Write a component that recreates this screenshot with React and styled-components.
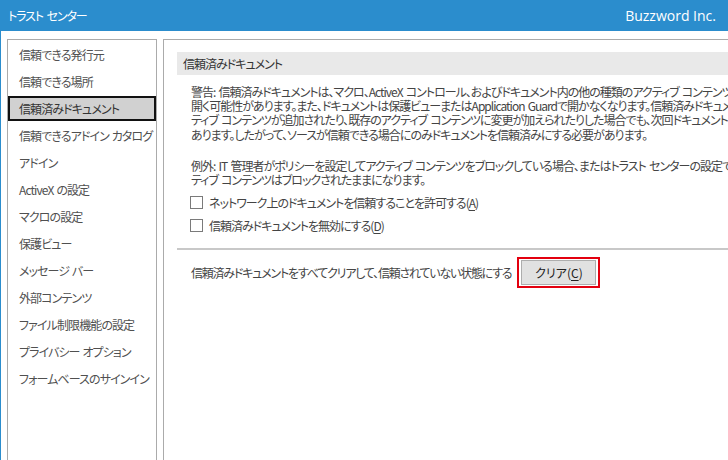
import React from 'react';
import styled, { createGlobalStyle } from 'styled-components';

const GlobalStyle = createGlobalStyle`
  html, body {
    margin: 0;
    padding: 0;
    height: 100%;
    overflow: hidden;
    background: #fff;
  }
  #root {
    height: 100%;
  }
`;

const BLUE = '#2b8dcd';
const JP = `"Noto Sans CJK JP", "Noto Sans", sans-serif`;

const navItems = [
  '信頼できる発行元',
  '信頼できる場所',
  '信頼済みドキュメント',
  '信頼できるアドイン カタログ',
  'アドイン',
  'ActiveX の設定',
  'マクロの設定',
  '保護ビュー',
  'メッセージ バー',
  '外部コンテンツ',
  'ファイル制限機能の設定',
  'プライバシー オプション',
  'フォームベースのサインイン',
];

const warning = [
  '警告: 信頼済みドキュメントは、マクロ、ActiveX コントロール、およびドキュメント内の他の種類のアクティブ コンテンツを',
  '開く可能性があります。また、ドキュメントは保護ビューまたはApplication Guardで開かなくなります。信頼済みドキュメントに新しいアク',
  'ティブ コンテンツが追加されたり、既存のアクティブ コンテンツに変更が加えられたりした場合でも、次回ドキュメントを開くときに確認されないことが',
  'あります。したがって、ソースが信頼できる場合にのみドキュメントを信頼済みにする必要があります。',
];

const exception = [
  '例外: IT 管理者がポリシーを設定してアクティブ コンテンツをブロックしている場合、またはトラスト センターの設定でアク',
  'ティブ コンテンツはブロックされたままになります。',
];

const App = () => (
  <>
    <GlobalStyle />
    <Window>
      <TitleBar>
        <TitleText>トラスト センター</TitleText>
        <Company>Buzzword Inc.</Company>
      </TitleBar>
      <Body>
        <Sidebar>
          {navItems.map(item => (
            <NavItem key={item} active={item === '信頼済みドキュメント'}>
              {item}
            </NavItem>
          ))}
        </Sidebar>
        <Panel>
          <SectionHeader>信頼済みドキュメント</SectionHeader>
          <Content>
            <Paragraph>
              {warning.map(line => (
                <Line key={line}>{line}</Line>
              ))}
            </Paragraph>
            <Paragraph gap>
              {exception.map(line => (
                <Line key={line}>{line}</Line>
              ))}
            </Paragraph>
            <CheckList>
              <CheckRow>
                <CheckBox />
                <span>
                  ネットワーク上のドキュメントを信頼することを許可する(<Key>A</Key>)
                </span>
              </CheckRow>
              <CheckRow>
                <CheckBox />
                <span>
                  信頼済みドキュメントを無効にする(<Key>D</Key>)
                </span>
              </CheckRow>
            </CheckList>
          </Content>
          <Divider />
          <ClearRow>
            <ClearText>信頼済みドキュメントをすべてクリアして、信頼されていない状態にする</ClearText>
            <Highlight>
              <Button>
                クリア(<Key>C</Key>)
              </Button>
            </Highlight>
          </ClearRow>
        </Panel>
      </Body>
    </Window>
  </>
);

export default App;

const Window = styled.div`
  display: flex;
  flex-direction: column;
  height: 100%;
  font-family: ${JP};
  font-feature-settings: 'palt';
  color: #444;
  font-size: 12px;
`;

const TitleBar = styled.div`
  display: flex;
  align-items: center;
  justify-content: space-between;
  height: 31px;
  padding: 0 12px 0 8px;
  background: ${BLUE};
  color: #fff;
  flex: none;
`;

const TitleText = styled.div`
  font-size: 12px;
  letter-spacing: -1.1px;
  word-spacing: 2px;
`;

const Company = styled.div`
  font-family: "Open Sans", "Noto Sans", sans-serif;
  font-size: 14px;
`;

const Body = styled.div`
  flex: 1;
  min-height: 0;
  display: flex;
  gap: 6px;
  padding: 8px 0 0 6px;
  border-left: 1px solid ${BLUE};
`;

const Sidebar = styled.div`
  flex: 0 0 150px;
  width: 150px;
  min-width: 0;
  overflow: hidden;
  box-sizing: border-box;
  border: 1px solid #ababab;
  border-bottom: none;
  padding-top: 1px;
`;

const NavItem = styled.div`
  height: 25px;
  box-sizing: border-box;
  margin: 1px 0 2px;
  padding-left: 9px;
  display: flex;
  align-items: center;
  white-space: nowrap;
  letter-spacing: -0.9px;
  word-spacing: 1px;
  border: 2px solid ${props => (props.active ? '#111' : 'transparent')};
  background: ${props => (props.active ? '#d1d1d1' : 'transparent')};
  color: ${props => (props.active ? '#333' : '#505050')};
`;

const Panel = styled.div`
  flex: 0 0 900px;
  box-sizing: border-box;
  border: 1px solid #ababab;
  border-bottom: none;
  padding: 12px 0 0 13px;
  letter-spacing: -1px;
  word-spacing: 1.5px;
`;

const SectionHeader = styled.div`
  height: 23px;
  display: flex;
  align-items: center;
  padding-left: 6px;
  background: #e9e9e9;
  color: #333;
`;

const Content = styled.div`
  padding: 10px 0 0 14px;
`;

const Paragraph = styled.div`
  line-height: 14.2px;
  margin-top: ${props => (props.gap ? '17px' : '0')};
`;

const Line = styled.div`
  white-space: nowrap;
`;

const CheckList = styled.div`
  margin-top: 4px;
`;

const CheckRow = styled.div`
  display: flex;
  align-items: center;
  gap: 6px;
  height: 23px;
  margin-left: -1px;
`;

const CheckBox = styled.span`
  width: 13px;
  height: 13px;
  box-sizing: border-box;
  border: 1px solid #7a7a7a;
  background: #fff;
  flex: none;
`;

const Key = styled.span`
  text-decoration: underline;
  text-underline-offset: 2px;
`;

const Divider = styled.div`
  height: 2px;
  background: #c8c8c8;
  margin-top: 11px;
`;

const ClearRow = styled.div`
  display: flex;
  align-items: center;
  gap: 6px;
  padding: 7px 0 0 14px;
`;

const ClearText = styled.span`
  letter-spacing: -1.2px;
`;

const Highlight = styled.div`
  border: 2px solid #e3000f;
  padding: 1px 2px;
  display: flex;
`;

const Button = styled.div`
  width: 75px;
  height: 25px;
  box-sizing: border-box;
  border: 1px solid #adadad;
  background: #e1e1e1;
  color: #222;
  letter-spacing: 0;
  display: flex;
  align-items: center;
  justify-content: center;
`;
